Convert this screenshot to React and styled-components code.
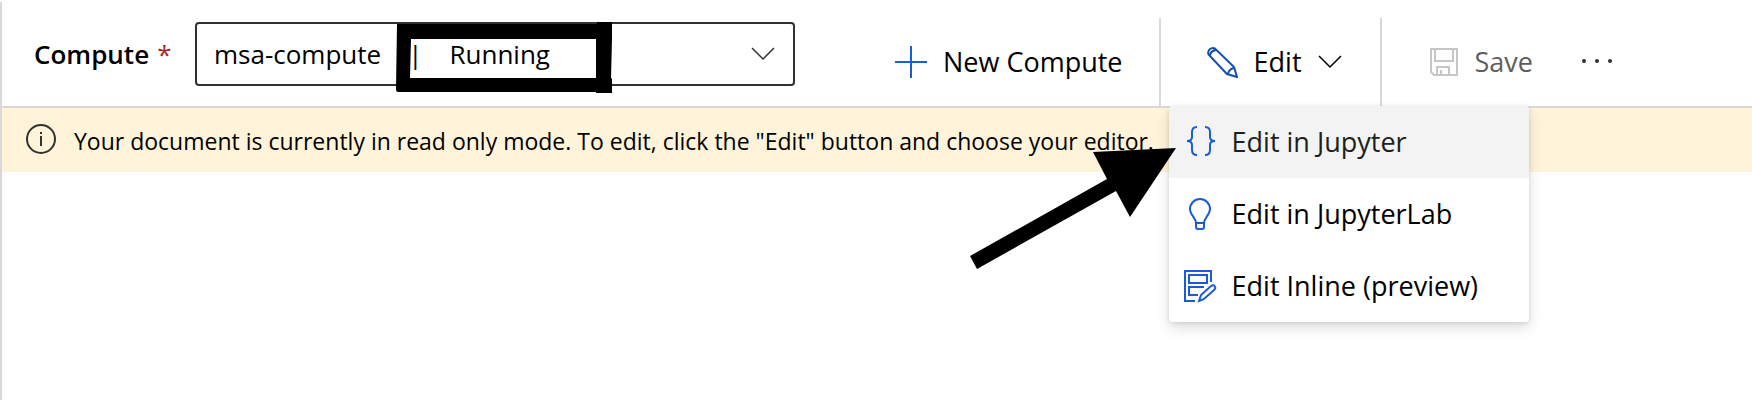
import React from "react";
import styled, { createGlobalStyle } from "styled-components";

const GlobalStyle = createGlobalStyle`
  * { box-sizing: border-box; }
  body {
    margin: 0;
    background: #ffffff;
    color: #000000;
    font-family: "Segoe UI", "Open Sans", "Noto Sans", sans-serif;
    font-size: 26px;
    line-height: 36px;
  }
  button, select { font: inherit; color: inherit; }
`;

const Page = styled.main`
  min-height: 100vh;
  padding-top: 2px;
`;

const Panel = styled.div`
  min-height: calc(100vh - 2px);
  border-left: 2px solid #d9d9d9;
`;

const Header = styled.header`
  display: flex;
  height: 106px;
  padding-left: 32px;
  border-bottom: 2px solid #d9d9d9;
`;

const Field = styled.div`
  display: flex;
  align-items: center;
  height: 64px;
  margin-top: 20px;
`;

const FieldLabel = styled.label`
  width: 161px;
  font-weight: 600;
  white-space: nowrap;
`;

const Required = styled.span`
  margin-left: 8px;
  color: #a4262c;
  font-weight: 400;
`;

const SelectBox = styled.div`
  position: relative;
  display: flex;
  align-items: center;
  width: 600px;
  height: 64px;
`;

const Select = styled.select`
  appearance: none;
  width: 100%;
  height: 100%;
  padding: 0 64px 0 17px;
  border: 2px solid #323130;
  border-radius: 4px;
  background: transparent;
`;

const SelectArrow = styled.svg`
  position: absolute;
  right: 20px;
  top: 25px;
  pointer-events: none;
`;

const StatusFrame = styled.svg`
  position: absolute;
  left: 200px;
  top: 0;
  pointer-events: none;
`;

const Toolbar = styled.div`
  display: flex;
  margin-top: 16px;
  margin-left: 76px;
  font-size: 27px;
`;

const ToolButton = styled.button`
  display: flex;
  align-items: center;
  gap: 16px;
  height: 88px;
  padding: 0 ${(p) => p.$right || 0}px 0 ${(p) => p.$left || 0}px;
  border: 0;
  background: transparent;
  white-space: nowrap;
  color: ${(p) => (p.disabled ? "#605e5c" : "#000000")};
  svg { flex: none; }
`;

const EditGroup = styled.div`
  position: relative;
  width: 223px;
  border: solid #d9d9d9;
  border-width: 0 2px;
`;

const Menu = styled.div`
  position: absolute;
  z-index: 1;
  top: 100%;
  left: 8px;
  width: 360px;
  border-radius: 4px;
  background: #ffffff;
  box-shadow: 0 6px 14px rgba(0, 0, 0, 0.13), 0 1px 4px rgba(0, 0, 0, 0.11);
  overflow: hidden;
`;

const MenuItem = styled.button`
  display: flex;
  align-items: center;
  gap: 16px;
  width: 100%;
  height: 72px;
  padding: 0 15px;
  border: 0;
  background: ${(p) => (p.$active ? "#f3f3f3" : "#ffffff")};
  color: ${(p) => (p.$active ? "#201f1e" : "#000000")};
  white-space: nowrap;
  svg { flex: none; overflow: visible; }
`;

const Pointer = styled.svg`
  position: absolute;
  z-index: 2;
  top: 128px;
  left: -193px;
  pointer-events: none;
`;

const Banner = styled.div`
  display: flex;
  align-items: center;
  gap: 17px;
  height: 64px;
  padding: 2px 23px 0;
  background: #fff4da;
  font-size: 23px;
  svg { flex: none; }
`;

const Chevron = () => (
  <path d="M1 1 L12 12 L23 1" fill="none" stroke="currentColor" strokeWidth="1.5" />
);

const PlusIcon = () => (
  <svg width="32" height="32" viewBox="0 0 32 32" stroke="#1a5cd6" strokeWidth="2">
    <path d="M16 0V32M0 16H32" />
  </svg>
);

const PencilIcon = () => (
  <svg width="32" height="32" viewBox="0 0 32 32" fill="none" stroke="#1450ae" strokeWidth="2">
    <path d="M2.5 8.5 A4.8 4.8 0 0 1 9 2.5 L28 21 L31 31 L21 28 Z M4 10 Q4 5 10 4 M22 28 Q23 23 28 22" />
  </svg>
);

const SaveIcon = () => (
  <svg width="30" height="30" viewBox="0 0 30 30" fill="none" stroke="#c8c6c4" strokeWidth="2">
    <path d="M2 2H28V28H5L2 25Z M6 2V14H24V2 M8 28V20H20V28 M12 23V28" />
  </svg>
);

const MoreIcon = () => (
  <svg width="32" height="8" viewBox="0 0 32 8" fill="#323130">
    <circle cx="3" cy="3" r="2" />
    <circle cx="16" cy="3" r="2" />
    <circle cx="29" cy="3" r="2" />
  </svg>
);

const BracesIcon = () => (
  <svg width="32" height="32" viewBox="0 0 32 32" fill="none" stroke="#1a5cd6" strokeWidth="2">
    <path d="M13 1 Q8 1 8 6 V11 Q8 15 3 15 Q8 15 8 19 V24 Q8 29 13 29 M21 1 Q26 1 26 6 V11 Q26 15 31 15 Q26 15 26 19 V24 Q26 29 21 29" />
  </svg>
);

const BulbIcon = () => (
  <svg width="32" height="32" viewBox="0 0 32 32" fill="none" stroke="#1a5cd6" strokeWidth="2">
    <path d="M12 25 C12 20 6 17 6 11 A10 10 0 0 1 26 11 C26 17 20 20 20 25 M12 25H20V29Q20 31 18 31H14Q12 31 12 29Z" />
  </svg>
);

const InlineIcon = () => (
  <svg width="32" height="32" viewBox="1 0 32 32" fill="none" stroke="#1a5cd6" strokeWidth="2">
    <path d="M12 31H2V1H28V12 M6 5H24V13H6Z M21 17H6V25H15" />
    <path d="M16 31 L18 25 L28 16 Q31 14 32 17 Q33 18 31 20 L21 29 Z" />
  </svg>
);

const InfoIcon = () => (
  <svg width="32" height="36" viewBox="0 0 32 36" fill="none" stroke="#323130" strokeWidth="2">
    <circle cx="16" cy="16" r="14" />
    <path d="M16 13V23M16 9V11" />
  </svg>
);

export default function App() {
  return (
    <Page>
      <GlobalStyle />
      <Panel>
        <Header>
          <Field>
            <FieldLabel htmlFor="compute">
              Compute<Required>*</Required>
            </FieldLabel>
            <SelectBox>
              <Select id="compute" defaultValue="msa">
                <option value="msa">
                  {"msa-compute\u00a0\u00a0\u00a0\u00a0|\u00a0\u00a0\u00a0\u00a0Running"}
                </option>
              </Select>
              <SelectArrow width="24" height="14" color="#323130" aria-hidden="true">
                <Chevron />
              </SelectArrow>
              <StatusFrame width="220" height="72" viewBox="0 0 220 72" aria-hidden="true">
                <path
                  fillRule="evenodd"
                  d="M2 2H202V0H217V17L216 56L217 57V71H201V70H3Q1 70 1 67ZM16 17L15 56H201V17Z"
                />
              </StatusFrame>
            </SelectBox>
          </Field>
          <Toolbar>
            <ToolButton type="button" $left={24} $right={36}>
              <PlusIcon />
              New Compute
            </ToolButton>
            <EditGroup>
              <ToolButton
                type="button"
                aria-haspopup="menu"
                aria-expanded="true"
                $left={45}
              >
                <PencilIcon />
                Edit
                <svg width="24" height="14">
                  <Chevron />
                </svg>
              </ToolButton>
              <Menu role="menu">
                <MenuItem type="button" role="menuitem" $active>
                  <BracesIcon />
                  Edit in Jupyter
                </MenuItem>
                <MenuItem type="button" role="menuitem">
                  <BulbIcon />
                  Edit in JupyterLab
                </MenuItem>
                <MenuItem type="button" role="menuitem">
                  <InlineIcon />
                  Edit Inline (preview)
                </MenuItem>
              </Menu>
              <Pointer width="210" height="126" viewBox="968 146 210 126" aria-hidden="true">
                <path d="M970 256L1107 179L1093 152L1176 148L1130 217L1116 191L977 269Z" />
              </Pointer>
            </EditGroup>
            <ToolButton type="button" disabled $left={47} $right={24}>
              <SaveIcon />
              Save
            </ToolButton>
            <ToolButton type="button" aria-label="More" $left={24} $right={24}>
              <MoreIcon />
            </ToolButton>
          </Toolbar>
        </Header>
        <Banner role="status">
          <InfoIcon />
          Your document is currently in read only mode. To edit, click the "Edit" button and choose your editor.
        </Banner>
      </Panel>
    </Page>
  );
}
